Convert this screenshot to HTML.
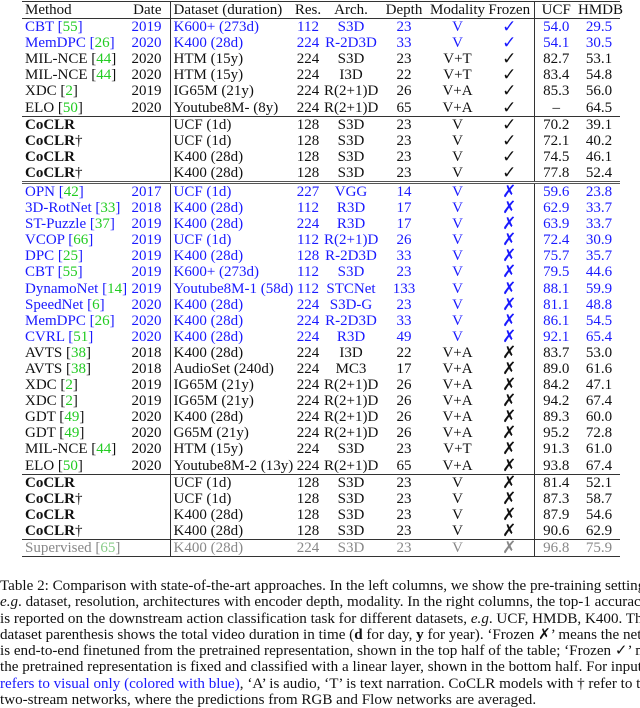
<!DOCTYPE html>
<html><head><meta charset="utf-8"><style>
html,body{margin:0;width:640px;height:696px;overflow:hidden;background:#fff;font-family:"Liberation Serif",serif;color:#111;}
table{position:absolute;left:22px;top:1px;width:598px;border-collapse:collapse;table-layout:fixed;font-size:15px;}
td{padding:0;height:16.1px;line-height:16px;white-space:nowrap;overflow:visible;text-align:center;}
td:nth-child(1){text-align:left;padding-left:3px;}
td:nth-child(2){text-align:right;padding-right:8px;border-right:1px solid #333;}
td:nth-child(3){text-align:left;padding-left:3px;}
td:nth-child(8){border-right:1px solid #333;font-size:17px;}
tr.h td{height:16px;font-size:15px;}
table{border-top:1px solid #333;}
tr.b td{border-bottom:1px solid #333;}
tr.d td{border-bottom:3px double #555;}
tr.bl td{color:#1a1aff;}
tr.gr td{color:#888;}
b{font-weight:bold;}
.g{color:#22cc22;}
.cap{position:absolute;left:0;top:578px;width:640px;overflow:hidden;font-size:15.1px;line-height:16.3px;white-space:nowrap;}
.cap span.bl{color:#1a1aff;}
</style></head><body>
<table>
<colgroup><col style="width:105px"><col style="width:43px"><col style="width:122px"><col style="width:32px"><col style="width:54px"><col style="width:52px"><col style="width:55px"><col style="width:49px"><col style="width:44px"><col style="width:42px"></colgroup>
<tr class="h b"><td>Method</td><td>Date</td><td>Dataset (duration)</td><td>Res.</td><td>Arch.</td><td>Depth</td><td>Modality</td><td>Frozen</td><td>UCF</td><td>HMDB</td></tr>
<tr class="bl"><td>CBT [<span class="g">55</span>]</td><td>2019</td><td>K600+ (273d)</td><td>112</td><td>S3D</td><td>23</td><td>V</td><td>✓</td><td>54.0</td><td>29.5</td></tr>
<tr class="bl"><td>MemDPC [<span class="g">26</span>]</td><td>2020</td><td>K400 (28d)</td><td>224</td><td>R-2D3D</td><td>33</td><td>V</td><td>✓</td><td>54.1</td><td>30.5</td></tr>
<tr><td>MIL-NCE [<span class="g">44</span>]</td><td>2020</td><td>HTM (15y)</td><td>224</td><td>S3D</td><td>23</td><td>V+T</td><td>✓</td><td>82.7</td><td>53.1</td></tr>
<tr><td>MIL-NCE [<span class="g">44</span>]</td><td>2020</td><td>HTM (15y)</td><td>224</td><td>I3D</td><td>22</td><td>V+T</td><td>✓</td><td>83.4</td><td>54.8</td></tr>
<tr><td>XDC [<span class="g">2</span>]</td><td>2019</td><td>IG65M (21y)</td><td>224</td><td>R(2+1)D</td><td>26</td><td>V+A</td><td>✓</td><td>85.3</td><td>56.0</td></tr>
<tr class="b"><td>ELO [<span class="g">50</span>]</td><td>2020</td><td>Youtube8M- (8y)</td><td>224</td><td>R(2+1)D</td><td>65</td><td>V+A</td><td>✓</td><td>–</td><td>64.5</td></tr>
<tr><td><b>CoCLR</b></td><td></td><td>UCF (1d)</td><td>128</td><td>S3D</td><td>23</td><td>V</td><td>✓</td><td>70.2</td><td>39.1</td></tr>
<tr><td><b>CoCLR</b>†</td><td></td><td>UCF (1d)</td><td>128</td><td>S3D</td><td>23</td><td>V</td><td>✓</td><td>72.1</td><td>40.2</td></tr>
<tr><td><b>CoCLR</b></td><td></td><td>K400 (28d)</td><td>128</td><td>S3D</td><td>23</td><td>V</td><td>✓</td><td>74.5</td><td>46.1</td></tr>
<tr class="d"><td><b>CoCLR</b>†</td><td></td><td>K400 (28d)</td><td>128</td><td>S3D</td><td>23</td><td>V</td><td>✓</td><td>77.8</td><td>52.4</td></tr>
<tr class="bl"><td>OPN [<span class="g">42</span>]</td><td>2017</td><td>UCF (1d)</td><td>227</td><td>VGG</td><td>14</td><td>V</td><td>✗</td><td>59.6</td><td>23.8</td></tr>
<tr class="bl"><td>3D-RotNet [<span class="g">33</span>]</td><td>2018</td><td>K400 (28d)</td><td>112</td><td>R3D</td><td>17</td><td>V</td><td>✗</td><td>62.9</td><td>33.7</td></tr>
<tr class="bl"><td>ST-Puzzle [<span class="g">37</span>]</td><td>2019</td><td>K400 (28d)</td><td>224</td><td>R3D</td><td>17</td><td>V</td><td>✗</td><td>63.9</td><td>33.7</td></tr>
<tr class="bl"><td>VCOP [<span class="g">66</span>]</td><td>2019</td><td>UCF (1d)</td><td>112</td><td>R(2+1)D</td><td>26</td><td>V</td><td>✗</td><td>72.4</td><td>30.9</td></tr>
<tr class="bl"><td>DPC [<span class="g">25</span>]</td><td>2019</td><td>K400 (28d)</td><td>128</td><td>R-2D3D</td><td>33</td><td>V</td><td>✗</td><td>75.7</td><td>35.7</td></tr>
<tr class="bl"><td>CBT [<span class="g">55</span>]</td><td>2019</td><td>K600+ (273d)</td><td>112</td><td>S3D</td><td>23</td><td>V</td><td>✗</td><td>79.5</td><td>44.6</td></tr>
<tr class="bl"><td>DynamoNet [<span class="g">14</span>]</td><td>2019</td><td>Youtube8M-1 (58d)</td><td>112</td><td>STCNet</td><td>133</td><td>V</td><td>✗</td><td>88.1</td><td>59.9</td></tr>
<tr class="bl"><td>SpeedNet [<span class="g">6</span>]</td><td>2020</td><td>K400 (28d)</td><td>224</td><td>S3D-G</td><td>23</td><td>V</td><td>✗</td><td>81.1</td><td>48.8</td></tr>
<tr class="bl"><td>MemDPC [<span class="g">26</span>]</td><td>2020</td><td>K400 (28d)</td><td>224</td><td>R-2D3D</td><td>33</td><td>V</td><td>✗</td><td>86.1</td><td>54.5</td></tr>
<tr class="bl"><td>CVRL [<span class="g">51</span>]</td><td>2020</td><td>K400 (28d)</td><td>224</td><td>R3D</td><td>49</td><td>V</td><td>✗</td><td>92.1</td><td>65.4</td></tr>
<tr><td>AVTS [<span class="g">38</span>]</td><td>2018</td><td>K400 (28d)</td><td>224</td><td>I3D</td><td>22</td><td>V+A</td><td>✗</td><td>83.7</td><td>53.0</td></tr>
<tr><td>AVTS [<span class="g">38</span>]</td><td>2018</td><td>AudioSet (240d)</td><td>224</td><td>MC3</td><td>17</td><td>V+A</td><td>✗</td><td>89.0</td><td>61.6</td></tr>
<tr><td>XDC [<span class="g">2</span>]</td><td>2019</td><td>IG65M (21y)</td><td>224</td><td>R(2+1)D</td><td>26</td><td>V+A</td><td>✗</td><td>84.2</td><td>47.1</td></tr>
<tr><td>XDC [<span class="g">2</span>]</td><td>2019</td><td>IG65M (21y)</td><td>224</td><td>R(2+1)D</td><td>26</td><td>V+A</td><td>✗</td><td>94.2</td><td>67.4</td></tr>
<tr><td>GDT [<span class="g">49</span>]</td><td>2020</td><td>K400 (28d)</td><td>224</td><td>R(2+1)D</td><td>26</td><td>V+A</td><td>✗</td><td>89.3</td><td>60.0</td></tr>
<tr><td>GDT [<span class="g">49</span>]</td><td>2020</td><td>G65M (21y)</td><td>224</td><td>R(2+1)D</td><td>26</td><td>V+A</td><td>✗</td><td>95.2</td><td>72.8</td></tr>
<tr><td>MIL-NCE [<span class="g">44</span>]</td><td>2020</td><td>HTM (15y)</td><td>224</td><td>S3D</td><td>23</td><td>V+T</td><td>✗</td><td>91.3</td><td>61.0</td></tr>
<tr class="b"><td>ELO [<span class="g">50</span>]</td><td>2020</td><td>Youtube8M-2 (13y)</td><td>224</td><td>R(2+1)D</td><td>65</td><td>V+A</td><td>✗</td><td>93.8</td><td>67.4</td></tr>
<tr><td><b>CoCLR</b></td><td></td><td>UCF (1d)</td><td>128</td><td>S3D</td><td>23</td><td>V</td><td>✗</td><td>81.4</td><td>52.1</td></tr>
<tr><td><b>CoCLR</b>†</td><td></td><td>UCF (1d)</td><td>128</td><td>S3D</td><td>23</td><td>V</td><td>✗</td><td>87.3</td><td>58.7</td></tr>
<tr><td><b>CoCLR</b></td><td></td><td>K400 (28d)</td><td>128</td><td>S3D</td><td>23</td><td>V</td><td>✗</td><td>87.9</td><td>54.6</td></tr>
<tr class="b"><td><b>CoCLR</b>†</td><td></td><td>K400 (28d)</td><td>128</td><td>S3D</td><td>23</td><td>V</td><td>✗</td><td>90.6</td><td>62.9</td></tr>
<tr class="gr b"><td>Supervised [<span class="g" style="color:#8c8">65</span>]</td><td>&nbsp;</td><td>K400 (28d)</td><td>224</td><td>S3D</td><td>23</td><td>V</td><td>✗</td><td>96.8</td><td>75.9</td></tr>
</table>
<div class="cap">
<div>Table 2: Comparison with state-of-the-art approaches. In the left columns, we show the pre-training setting,</div>
<div><i>e.g</i>. dataset, resolution, architectures with encoder depth, modality. In the right columns, the top-1 accuracy</div>
<div>is reported on the downstream action classification task for different datasets, <i>e.g</i>. UCF, HMDB, K400. The</div>
<div>dataset parenthesis shows the total video duration in time (<b>d</b> for day, <b>y</b> for year). ‘Frozen ✗’ means the network</div>
<div>is end-to-end finetuned from the pretrained representation, shown in the top half of the table; ‘Frozen ✓’ means</div>
<div>the pretrained representation is fixed and classified with a linear layer, shown in the bottom half. For input, <span class="bl">‘V’</span></div>
<div><span class="bl">refers to visual only (colored with blue)</span>, ‘A’ is audio, ‘T’ is text narration. CoCLR models with † refer to the</div>
<div>two-stream networks, where the predictions from RGB and Flow networks are averaged.</div>
</div>
</body></html>
